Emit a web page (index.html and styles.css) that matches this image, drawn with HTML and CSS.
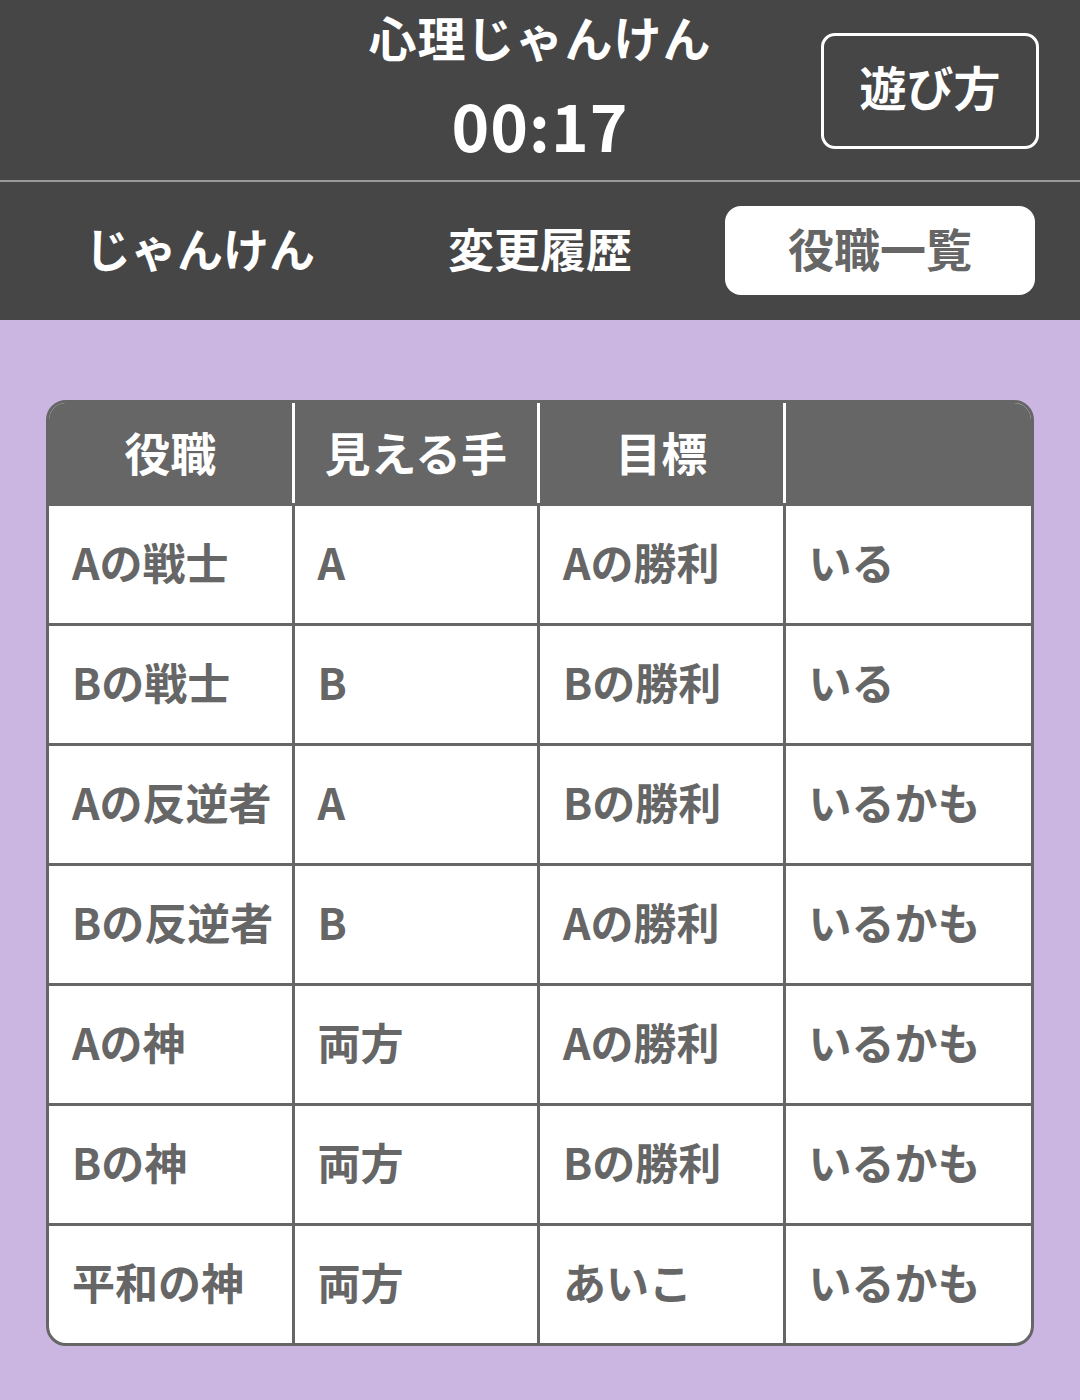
FILE: index.html
```html
<!DOCTYPE html>
<html lang="ja">
<head>
<meta charset="utf-8">
<title>心理じゃんけん</title>
<link rel="stylesheet" href="styles.css">
</head>
<body>
<header class="top">
  <div class="top-side"></div>
  <div class="top-center">
    <div class="title">心理じゃんけん</div>
    <div class="timer">00:17</div>
  </div>
  <div class="top-side right">
    <button class="help-btn">遊び方</button>
  </div>
</header>
<nav class="tabs">
  <div class="tab">じゃんけん</div>
  <div class="tab">変更履歴</div>
  <div class="tab active">役職一覧</div>
</nav>
<main class="content">
  <div class="roles">
    <div class="row head">
      <div class="cell">役職</div>
      <div class="cell">見える手</div>
      <div class="cell">目標</div>
      <div class="cell"></div>
    </div>
    <div class="row">
      <div class="cell">Aの戦士</div>
      <div class="cell">A</div>
      <div class="cell">Aの勝利</div>
      <div class="cell">いる</div>
    </div>
    <div class="row">
      <div class="cell">Bの戦士</div>
      <div class="cell">B</div>
      <div class="cell">Bの勝利</div>
      <div class="cell">いる</div>
    </div>
    <div class="row">
      <div class="cell">Aの反逆者</div>
      <div class="cell">A</div>
      <div class="cell">Bの勝利</div>
      <div class="cell">いるかも</div>
    </div>
    <div class="row">
      <div class="cell">Bの反逆者</div>
      <div class="cell">B</div>
      <div class="cell">Aの勝利</div>
      <div class="cell">いるかも</div>
    </div>
    <div class="row">
      <div class="cell">Aの神</div>
      <div class="cell">両方</div>
      <div class="cell">Aの勝利</div>
      <div class="cell">いるかも</div>
    </div>
    <div class="row">
      <div class="cell">Bの神</div>
      <div class="cell">両方</div>
      <div class="cell">Bの勝利</div>
      <div class="cell">いるかも</div>
    </div>
    <div class="row">
      <div class="cell">平和の神</div>
      <div class="cell">両方</div>
      <div class="cell">あいこ</div>
      <div class="cell">いるかも</div>
    </div>
  </div>
</main>
</body>
</html>
```

FILE: styles.css
```css
* { box-sizing: border-box; }
html, body {
  margin: 0;
  padding: 0;
}
body {
  width: 1080px;
  min-height: 1400px;
  background: #cbb6e2;
  font-family: "Noto Sans CJK JP", "Noto Sans", sans-serif;
  font-weight: 700;
}
.top {
  height: 180px;
  background: #464646;
  display: grid;
  grid-template-columns: 1fr auto 1fr;
  align-items: center;
  border-bottom: 2px solid #9a9a9a;
  box-sizing: content-box;
}
.top-center {
  display: flex;
  flex-direction: column;
  align-items: center;
  color: #fff;
  margin-top: -10px;
}
.title {
  font-size: 48px;
  line-height: 56px;
  letter-spacing: 1px;
}
.timer {
  font-size: 64px;
  line-height: 76px;
  margin-top: 22px;
  letter-spacing: 1px;
}
.top-side.right {
  display: flex;
  justify-content: flex-end;
  padding-right: 41px;
}
.help-btn {
  width: 218px;
  height: 116px;
  background: transparent;
  border: 3px solid #fff;
  border-radius: 14px;
  color: #fff;
  font-family: inherit;
  font-weight: 700;
  font-size: 47px;
  padding: 0 0 10px 0;
  margin-top: 1px;
}
.tabs {
  height: 138px;
  background: #464646;
  display: grid;
  grid-template-columns: repeat(3, 310px);
  column-gap: 30px;
  justify-content: center;
  align-items: center;
}
.tab {
  height: 89px;
  display: flex;
  align-items: center;
  justify-content: center;
  color: #fff;
  font-size: 46px;
  border-radius: 16px;
  margin-top: -2px;
  padding-bottom: 6px;
}
.tab.active {
  background: #fff;
  color: #666;
}
.content {
  padding: 80px 46px 56px 46px;
}
.roles {
  border: 3px solid #666;
  border-radius: 20px;
  overflow: hidden;
  background: #fff;
}
.row {
  display: grid;
  grid-template-columns: repeat(4, 1fr);
  height: 120px;
  border-top: 3px solid #666;
}
.row.head {
  height: 100px;
  border-top: none;
  background: #666;
}
.cell {
  display: flex;
  align-items: center;
  padding-left: 23px;
  padding-bottom: 8px;
  font-size: 43px;
  color: #666;
  border-right: 3px solid #666;
}
.cell:last-child {
  border-right: none;
}
.head .cell {
  justify-content: center;
  padding-left: 0;
  padding-bottom: 4px;
  color: #fff;
  font-size: 46px;
  border-right-color: #fff;
}
.head .cell:last-child {
  border-right: none;
}
```
